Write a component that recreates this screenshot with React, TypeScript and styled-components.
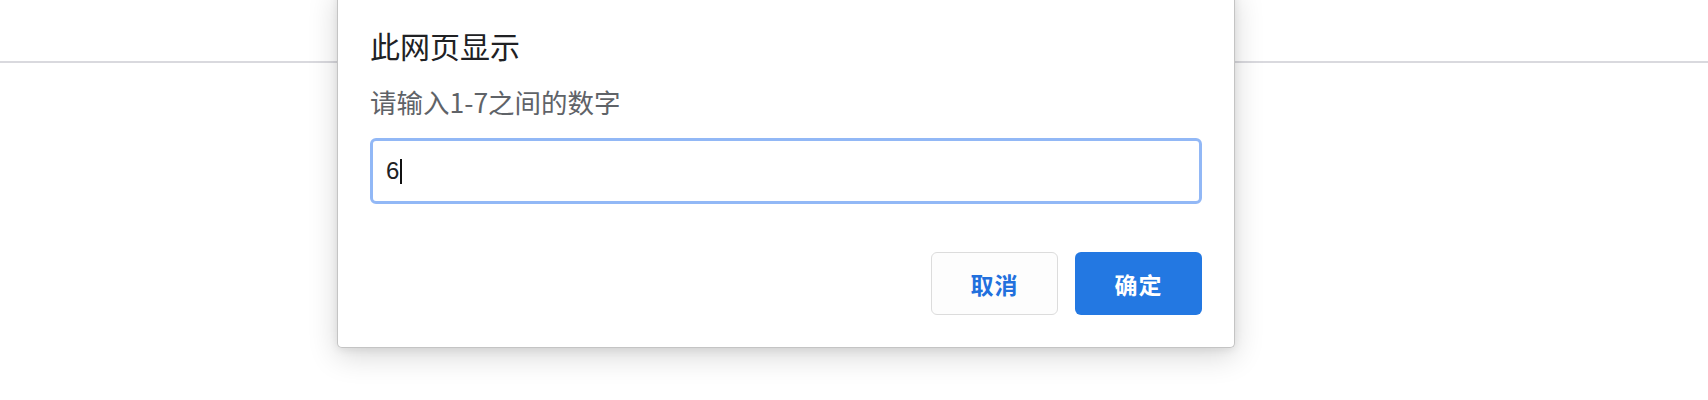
import React, {FC} from 'react';
import styled, {createGlobalStyle} from 'styled-components';

const GlobalStyle = createGlobalStyle`
  html, body {
    margin: 0;
    padding: 0;
    background: #ffffff;
  }
  body {
    font-family: "Noto Sans CJK SC", "Noto Sans", sans-serif;
  }
`

type ButtonProps = {
  $primary?: boolean
};

const PromptDialog: FC = () => {
  return (
    <Dialog>
      <Title>此网页显示</Title>
      <Message>请输入1-7之间的数字</Message>
      <FakeInput>
        <InputText>6</InputText>
        <Caret />
      </FakeInput>
      <Actions>
        <DialogButton>取消</DialogButton>
        <DialogButton $primary>确定</DialogButton>
      </Actions>
    </Dialog>
  );
};

const App: FC = () => {
  return (
    <Page>
      <GlobalStyle />
      <TopBar />
      <PromptDialog />
    </Page>
  );
};

export default App;

const Page = styled.div`
  position: relative;
  width: 100%;
  height: 400px;
  overflow: hidden;
  background: #ffffff;
`
const TopBar = styled.div`
  height: 61px;
  border-bottom: 2px solid #d9d9de;
`
const Dialog = styled.div`
  position: absolute;
  left: 337px;
  top: -12px;
  width: 898px;
  box-sizing: border-box;
  padding: 37px 32px 32px 32px;
  background: #ffffff;
  border: 1px solid #c4c4c4;
  border-top: none;
  border-radius: 0 0 5px 5px;
  box-shadow: 0 8px 30px rgba(0, 0, 0, 0.16), 0 2px 8px rgba(0, 0, 0, 0.08);
  display: flex;
  flex-direction: column;
`
const Title = styled.div`
  font-size: 30px;
  line-height: 40px;
  color: #202124;
`
const Message = styled.div`
  margin-top: 19px;
  font-size: 26.5px;
  line-height: 36px;
  color: #5f6368;
`
const FakeInput = styled.div`
  margin-top: 18px;
  height: 66px;
  box-sizing: border-box;
  border: 3px solid #92b8f6;
  border-radius: 6px;
  padding: 0 13px;
  display: flex;
  align-items: center;
`
const InputText = styled.span`
  font-family: "Liberation Sans", Arial, sans-serif;
  font-size: 24px;
  color: #202124;
`
const Caret = styled.span`
  display: inline-block;
  width: 2px;
  height: 25px;
  margin-left: 1px;
  background: #111111;
`
const Actions = styled.div`
  margin-top: 48px;
  display: flex;
  justify-content: flex-end;
  gap: 17px;
`
const DialogButton = styled.button<ButtonProps>`
  width: 127px;
  height: 63px;
  box-sizing: border-box;
  border-radius: 6px;
  font-family: "Noto Sans CJK SC", sans-serif;
  font-size: 23px;
  font-weight: 700;
  letter-spacing: 1px;
  cursor: pointer;
  color: ${p => (p.$primary ? '#ffffff' : '#2270dd')};
  background: ${p => (p.$primary ? '#2378e2' : '#fdfdfd')};
  border: ${p => (p.$primary ? 'none' : '1px solid #dcdcdc')};
`
